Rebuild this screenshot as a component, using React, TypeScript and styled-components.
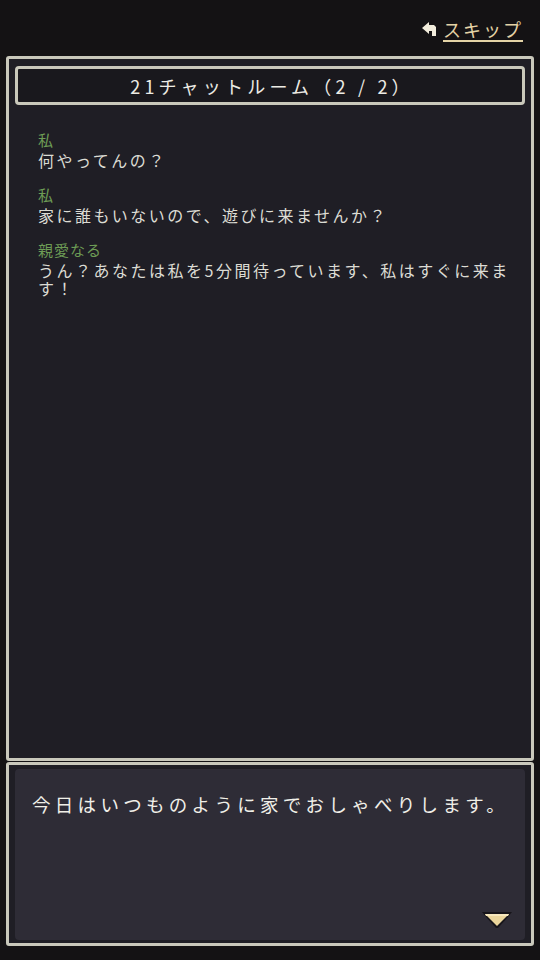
import styled, { createGlobalStyle } from 'styled-components';

const GlobalStyle = createGlobalStyle`
  html, body {
    margin: 0;
    padding: 0;
    background: #141214;
  }
  * {
    box-sizing: border-box;
  }
`;

const FONT = `"Noto Sans CJK JP", "Noto Sans", "DejaVu Sans", sans-serif`;
const FRAME = '#c9c8bb';

const messages = [
  { name: '私', text: '何やってんの？' },
  { name: '私', text: '家に誰もいないので、遊びに来ませんか？' },
  { name: '親愛なる', text: 'うん？あなたは私を5分間待っています、私はすぐに来ます！' },
];

function SkipArrow() {
  return (
    <svg width="16" height="14" viewBox="0 0 16 14">
      <polygon points="0,6 7,0 7,3 12,3 14,5 14,14 10,14 10,9 7,9 7,12" fill="#f2ecdc" />
    </svg>
  );
}

function NextMarker() {
  return (
    <svg width="32" height="20" viewBox="0 0 32 20">
      <polygon points="1,2 31,2 27,7 17,18 15,18 5,7" fill="#17151a" />
      <polygon points="4,4 28,4 24,8 16,16 8,8" fill="#ead59c" />
      <polygon points="4,4 28,4 27,6 5,6" fill="#f6e7bd" />
    </svg>
  );
}

export default function App() {
  return (
    <>
      <GlobalStyle />
      <Page>
        <TopBar>
          <SkipLink>
            <SkipArrow />
            <SkipLabel>スキップ</SkipLabel>
          </SkipLink>
        </TopBar>
        <ChatPanel>
          <TitleBox>21チャットルーム（2 / 2）</TitleBox>
          <MessageList>
            {messages.map((m, index) => (
              <Message key={`msg-${index}`}>
                <Sender>{m.name}</Sender>
                <Body>{m.text}</Body>
              </Message>
            ))}
          </MessageList>
        </ChatPanel>
        <DialogPanel>
          <DialogInner>
            <DialogText>今日はいつものように家でおしゃべりします。</DialogText>
            <MarkerRow>
              <NextMarker />
            </MarkerRow>
          </DialogInner>
        </DialogPanel>
      </Page>
    </>
  );
}

const Page = styled.div`
  width: 540px;
  height: 960px;
  display: flex;
  flex-direction: column;
  background: #141214;
  font-family: ${FONT};
  overflow: hidden;
`;

const TopBar = styled.div`
  height: 56px;
  display: flex;
  justify-content: flex-end;
  align-items: center;
  padding: 2px 17px 0 0;
`;

const SkipLink = styled.a`
  display: flex;
  align-items: center;
  gap: 5px;
  cursor: pointer;
`;

const SkipLabel = styled.span`
  font-size: 18px;
  line-height: 22px;
  letter-spacing: 2px;
  color: #e4d3a6;
  text-decoration: underline;
  text-underline-offset: 3px;
  text-decoration-thickness: 2px;
`;

const ChatPanel = styled.div`
  margin: 0 6px;
  height: 705px;
  border: 3px solid ${FRAME};
  border-radius: 3px;
  background: #1f1e25;
  padding: 7px 6px;
  display: flex;
  flex-direction: column;
`;

const TitleBox = styled.div`
  height: 39px;
  border: 3px solid ${FRAME};
  border-radius: 4px;
  background: #19181d;
  color: #ecebe4;
  font-size: 18px;
  letter-spacing: 4.2px;
  padding-left: 4px;
  display: flex;
  align-items: center;
  justify-content: center;
`;

const MessageList = styled.div`
  display: flex;
  flex-direction: column;
  gap: 15px;
  padding: 24px 10px 0 23px;
`;

const Message = styled.div`
  display: flex;
  flex-direction: column;
  width: 482px;
`;

const Sender = styled.div`
  font-size: 15px;
  line-height: 22px;
  color: #6d9c55;
  letter-spacing: 1px;
`;

const Body = styled.div`
  font-size: 16px;
  line-height: 18px;
  color: #dcdcd4;
  letter-spacing: 2.5px;
`;

const DialogPanel = styled.div`
  margin: 1px 6px 0;
  height: 184px;
  border: 3px solid ${FRAME};
  border-radius: 3px;
  background: #1f1e25;
  padding: 4px 6px 3px;
  display: flex;
`;

const DialogInner = styled.div`
  flex: 1;
  background: #2e2c36;
  border-radius: 4px;
  padding: 22px 12px 10px 17px;
  display: flex;
  flex-direction: column;
`;

const DialogText = styled.div`
  font-size: 18.5px;
  line-height: 26px;
  color: #f0efe8;
  letter-spacing: 4.3px;
`;

const MarkerRow = styled.div`
  margin-top: auto;
  display: flex;
  justify-content: flex-end;
`;
